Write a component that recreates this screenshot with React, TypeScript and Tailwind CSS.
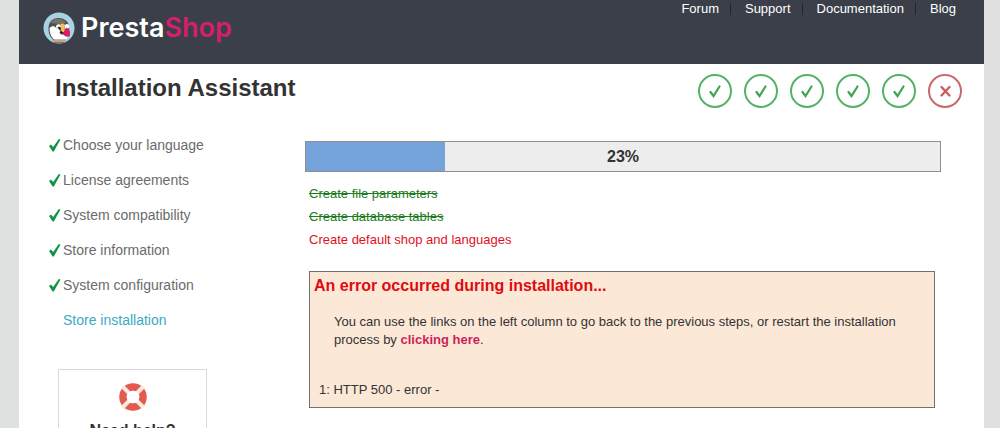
import React from 'react';

const links = ['Forum', 'Support', 'Documentation', 'Blog'];

const steps = [
  { label: 'Choose your language', done: true },
  { label: 'License agreements', done: true },
  { label: 'System compatibility', done: true },
  { label: 'Store information', done: true },
  { label: 'System configuration', done: true },
  { label: 'Store installation', done: false },
];

const tasks = [
  { label: 'Create file parameters', className: 'text-[#1c7c22] line-through' },
  { label: 'Create database tables', className: 'text-[#1c7c22] line-through' },
  { label: 'Create default shop and languages', className: 'text-[#e0101c]' },
];

function Puffin() {
  return (
    <svg viewBox="0 0 32 32" className="size-8 shrink-0" aria-hidden="true">
      <circle cx="16" cy="16" r="15.5" fill="#a9d3e2" />
      <path d="M5.500 18C5 10 9 6 15.500 6C21 6 25 9 26 14C27 20 24 28 16 29C9 29 6 24 5.500 18Z" fill="#4c4f52" />
      <path d="M7 11C9 7.500 13 6 17 7C20 7.500 22 9 23 11L16 12Z" fill="#77716b" />
      <path d="M6.500 16C9 13.500 12 14 13 16C15 18 18 20 20 22C22 24 24 25 25 25C23 28 20 29 16 29C10 29 6.500 23 6.500 16Z" fill="#fff" />
      <path d="M13 15C13 11.500 17 11.500 18 14L17 20L14 18Z" fill="#fff" />
      <path d="M17 13C18 11 21 11 22 13L21.500 20L18.500 20Z" fill="#f5bd5c" />
      <path d="M14.500 15.500C16 14 17.500 15 18 16.500L17 18.500Z" fill="#25201e" />
      <path d="M17.500 19L20 20L19.500 23L16.500 21Z" fill="#25201e" />
      <path d="M22 13C24 11 26.500 12.500 26.500 15L24.500 17.500L22 16.500Z" fill="#fff" />
      <path d="M23.500 15.500C26.500 17 28 20 26.500 24.500C24 25 21 24 19.500 21C21.500 20 22.500 18 23.500 15.500Z" fill="#db1a68" />
      <path d="M9 27.500H23L21 31H11Z" fill="#8c7466" />
      <path d="M10 29H22" stroke="#d7b28c" strokeWidth="1.500" />
    </svg>
  );
}

function StepTick() {
  return (
    <svg viewBox="0 0 12 14" className="h-3.5 w-3 shrink-0" aria-hidden="true">
      <path d="M0 8L2 6.500L4.200 9L9.800 1L11.500 1.500L4.800 13.500H3.600Z" fill="#0f9545" />
    </svg>
  );
}

function StatusIcon({ ok }: { ok: boolean }) {
  return (
    <svg viewBox="0 0 34 34" className="size-[34px]" fill="none" aria-hidden="true">
      <circle cx="17" cy="17" r="16" stroke={ok ? '#55b269' : '#ca686c'} strokeWidth="2" />
      {ok ? (
        <path d="M12.500 18L15.500 22L21.500 12.500" stroke="#3fa554" strokeWidth="2.200" strokeLinecap="round" />
      ) : (
        <path d="M13.500 13L21.500 21.500M21.500 13L13.500 21.500" stroke="#c85c61" strokeWidth="2.400" strokeLinecap="round" />
      )}
    </svg>
  );
}

function Lifebuoy() {
  return (
    <svg viewBox="0 0 28 28" className="size-7" fill="none" aria-hidden="true">
      <path d="M14 0.500C24 0.500 27.500 4 27.500 14S24 27.500 14 27.500S0.500 24 0.500 14S4 0.500 14 0.500Z" fill="#f6ebe3" />
      <circle cx="14" cy="14" r="10" stroke="#e55a4f" strokeWidth="7.500" />
      <path d="M3.500 3.500L24.500 24.500M24.500 3.500L3.500 24.500" stroke="#f6ebe3" strokeWidth="4" />
      <circle cx="14" cy="14" r="6.300" fill="#fff" />
    </svg>
  );
}

export default function App() {
  return (
    <div className="h-screen overflow-hidden bg-[#dfe1e0] pl-[19px] pr-4 font-['Liberation_Sans',Arial,sans-serif] text-[13px] text-[#333]">
      <div className="min-h-full bg-white">
        <header className="flex h-16 justify-between bg-[#3a3f49] pl-6 pr-7">
          <div className="flex items-center gap-1.5 self-start pt-3">
            <Puffin />
            <span className="font-['Inter',sans-serif] text-[27px] leading-8 font-semibold text-white">
              Presta<span className="text-[#d51f6b]">Shop</span>
            </span>
          </div>
          <nav>
            <ul className="flex leading-[18px] text-white">
              {links.map((link, i) => (
                <li key={link} className="flex h-[18px] items-center">
                  {i > 0 && <span className="mr-3.5 ml-[11px] h-3 w-px bg-[#20242b]" />}
                  <a href="#">{link}</a>
                </li>
              ))}
            </ul>
          </nav>
        </header>

        <div className="flex items-start justify-between pt-2.5 pr-[22px] pl-9">
          <h1 className="text-2xl leading-7 font-bold">Installation Assistant</h1>
          <div className="flex gap-3">
            {steps.map((step) => (
              <StatusIcon key={step.label} ok={step.done} />
            ))}
          </div>
        </div>

        <div className="flex pt-[19px]">
          <aside className="w-[286px] shrink-0 pl-[30px]">
            <ol className="text-sm text-[#6b6b6b]">
              {steps.map((step) => (
                <li key={step.label} className="flex h-[35px] items-center gap-0.5">
                  {step.done ? (
                    <>
                      <StepTick />
                      <a href="#">{step.label}</a>
                    </>
                  ) : (
                    <span className="pl-3.5 text-[#3ba9c6]">{step.label}</span>
                  )}
                </li>
              ))}
            </ol>
            <div className="mt-8 ml-[9px] flex w-[149px] flex-col items-center border border-[#d9d9d9] pt-[13px] pb-4">
              <Lifebuoy />
              <h2 className="mt-2 text-base leading-6 font-bold">Need help?</h2>
            </div>
          </aside>

          <main className="min-w-0 grow pt-3.5 pr-[43px]">
            <div
              role="progressbar"
              aria-valuenow={23}
              className="relative h-[31px] border border-[#8d8f91] bg-[#ededed]"
            >
              <div className="h-full w-[22%] bg-[#74a2da]" />
              <span className="absolute inset-0 flex items-center justify-center text-base font-bold">23%</span>
            </div>

            <ol className="mt-2.5 pl-1">
              {tasks.map((task) => (
                <li key={task.label} className="leading-[23px]">
                  <span className={task.className}>{task.label}</span>
                </li>
              ))}
            </ol>

            <section className="mt-5 mr-1.5 ml-1 border border-[#73706d] bg-[#fce8d7] pt-1 pr-5 pb-2 pl-1">
              <h3 className="text-base leading-5 font-bold text-[#dd0c10]">An error occurred during installation...</h3>
              <p className="mt-[17px] pl-5 leading-[18px]">
                You can use the links on the left column to go back to the previous steps, or restart the installation
                process by{' '}
                <a href="#" className="font-bold text-[#cc1f5a]">
                  clicking here
                </a>
                .
              </p>
              <p className="mt-8 pl-[5px] leading-[18px]">1: HTTP 500 - error -</p>
            </section>
          </main>
        </div>
      </div>
    </div>
  );
}
